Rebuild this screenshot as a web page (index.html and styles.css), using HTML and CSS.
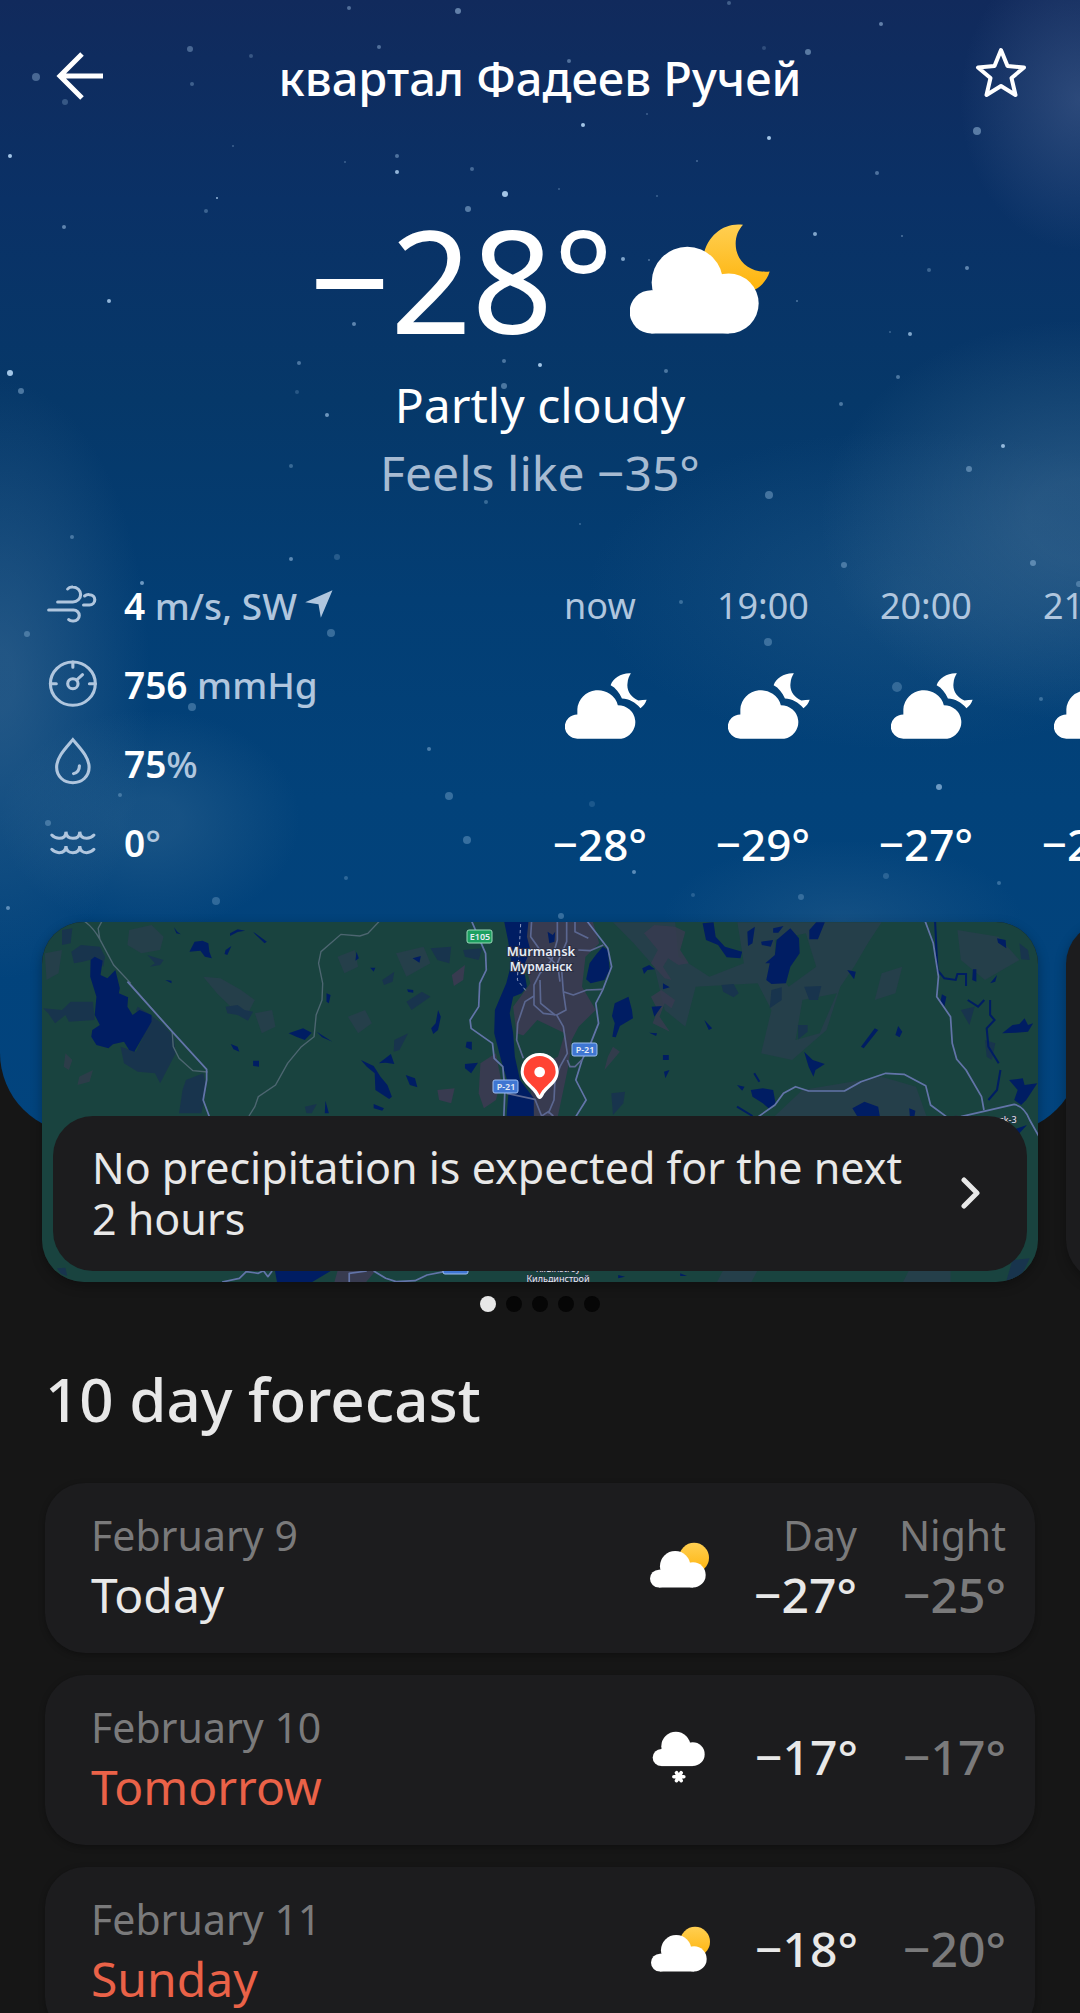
FILE: index.html
```html
<!DOCTYPE html>
<html lang="en">
<head>
  <meta charset="UTF-8" />
  <meta name="viewport" content="width=device-width, initial-scale=1.0"/>
  <title>Weather</title>
  <link rel="stylesheet" href="styles.css">
</head>
<body>
  <!-- shared icons -->
  <svg class="sprite" aria-hidden="true">
    <defs>
      <linearGradient id="gold" x1="0" y1="0" x2="0" y2="1">
        <stop offset="0" stop-color="#ffcf52"/>
        <stop offset="1" stop-color="#feb40c"/>
      </linearGradient>
    </defs>
    <symbol id="cloud-moon" viewBox="70 399 239 199" preserveAspectRatio="none">
      <path d="M106 597a36 36 0 0 1 0-73V508a60 60 0 0 1 118-12a51 51 0 0 1 10 101z"/>
      <path d="M262 400C235 398 210 415 203 436C218 444 228 458 236 476C256 477 275 487 290 505C298 500 304 492 308 480Q296 480 284 482C262 472 250 452 252 432C253 418 257 408 262 400Z"/>
    </symbol>
    <symbol id="cloud-sun" viewBox="153 188 178 136">
      <circle cx="286" cy="234" r="45" fill="url(#gold)"/>
      <circle cx="180" cy="297" r="27"/>
      <circle cx="229" cy="260" r="46"/>
      <circle cx="283" cy="286" r="38"/>
      <path d="M180 270H283V324H180z"/>
    </symbol>
    <symbol id="cloud-snow" viewBox="153 752 178 160">
      <circle cx="184" cy="832" r="26"/>
      <circle cx="228" cy="798" r="44"/>
      <circle cx="279" cy="822" r="36"/>
      <path d="M184 806H279V858H184z"/>
      <path d="M222 890H252M230 878L244 902M244 878L230 902" stroke="#fff" stroke-width="11" stroke-linecap="round"/>
    </symbol>
  </svg>

  <section class="hero">
    <svg class="stars" id="stars" viewBox="0 0 1080 1133" preserveAspectRatio="xMidYMin slice" aria-hidden="true"></svg>

    <header class="top-bar">
      <button class="icon-btn" aria-label="Back">
        <svg width="52" height="56" viewBox="0 0 52 56"><path d="M30 4L8 26L30 48M9 26H51" fill="none" stroke="#fff" stroke-width="5"/></svg>
      </button>
      <h1>квартал Фадеев Ручей</h1>
      <button class="icon-btn" aria-label="Add to favourites">
        <svg width="52" height="56" viewBox="0 0 52 56"><path d="M25 0L31.500 16L48 17.500L35.500 28L39.500 45L25 36L10.500 45L14.500 28L2 17.500L18.500 16Z" fill="none" stroke="#fff" stroke-width="4" stroke-linejoin="round"/></svg>
      </button>
    </header>

    <div class="current">
      <span class="temp">−28°</span>
      <svg width="141" height="110" viewBox="80 74 423 329" fill="#fff">
        <path d="M419 76C365 68 312 105 300 170L360 260L455 270C475 260 492 240 499 216C440 222 397 185 397 133C397 110 405 92 419 76Z" fill="url(#gold)"/>
        <circle cx="144" cy="337" r="65"/>
        <circle cx="252" cy="249" r="107"/>
        <circle cx="376" cy="312" r="90"/>
        <path d="M144 273H376V402H144z"/>
      </svg>
    </div>
    <p class="condition">Partly cloudy</p>
    <p class="condition muted">Feels like −35°</p>

    <div class="details">
      <ul class="stats">
        <li>
          <svg viewBox="140 118 139 144" preserveAspectRatio="none"><path d="M168 184H212A22 22 0 0 0 212 139Q202 138 197 145M243 193H260A15 15 0 0 0 260 162Q252 161 246 166M142 208H214A16 16 0 0 1 214 241Q205 242 200 237"/></svg>
          <span><b>4</b> m/s, SW</span>
          <svg class="direction" viewBox="893 149 83 84"><path d="M975 150L940 232L933 192L893 186Z"/></svg>
        </li>
        <li>
          <svg viewBox="140 355 139 144" preserveAspectRatio="none"><circle cx="212" cy="429" r="65"/><circle cx="212" cy="429" r="15"/><path d="M212 364V380M147 429H164M260 429H277M223 418L240 402"/></svg>
          <span><b>756</b> mmHg</span>
        </li>
        <li>
          <svg viewBox="140 592 139 144" preserveAspectRatio="none"><path d="M212 597C235 625 259 650 259 680C259 708 238 726 212 726C186 726 165 708 165 680C165 650 189 625 212 597ZM231 675Q231 694 214 699"/></svg>
          <span><b>75</b>%</span>
        </li>
        <li>
          <svg viewBox="140 829 139 144" preserveAspectRatio="none"><path d="M151 883Q160 893 172 893Q192 893 192 873Q193 893 212 893Q232 893 232 873Q233 893 252 893Q264 893 273 883M151 926Q160 936 172 936Q192 936 192 916Q193 936 212 936Q232 936 232 916Q233 936 252 936Q264 936 273 926"/></svg>
          <span><b>0</b>°</span>
        </li>
      </ul>

      <ul class="hours">
        <li><span class="hour">now</span><svg><use href="#cloud-moon"/></svg><span class="hour-temp">−28°</span></li>
        <li><span class="hour">19:00</span><svg><use href="#cloud-moon"/></svg><span class="hour-temp">−29°</span></li>
        <li><span class="hour">20:00</span><svg><use href="#cloud-moon"/></svg><span class="hour-temp">−27°</span></li>
        <li><span class="hour">21:00</span><svg><use href="#cloud-moon"/></svg><span class="hour-temp">−27°</span></li>
      </ul>
    </div>
  </section>

  <section class="carousel">
    <article class="map-card">
      <svg class="map" viewBox="42 22 996 360" preserveAspectRatio="xMidYMid slice" role="img" aria-label="Map">
        <g transform="scale(.34439 .33333)">
          <rect x="100" y="50" width="2950" height="1120" fill="#19433f"/>

          <!-- open ground -->
          <g fill="#253f4a">
            <path d="M375 90L440 75L475 110L465 150L410 160L370 135Z"/>
            <path d="M590 230L640 235L700 270L740 300L720 340L670 320L630 280Z"/>
            <path d="M740 340L790 330L800 380L760 400Z"/>
            <path d="M980 170L1030 150L1040 200L1000 220Z"/>
            <path d="M1010 350L1060 330L1080 370L1040 400Z"/>
            <path d="M1150 160L1230 140L1250 190L1180 230Z"/>
            <path d="M130 160L180 150L170 220L135 240Z"/>
            <path d="M1780 67H2560L2520 130L2480 200L2440 260L2400 390L2300 480L2210 460L2240 330L2200 250L2020 260L1990 380L1930 330L1900 200L1840 130Z"/>
            <path d="M2560 220L2620 200L2600 280L2540 300Z"/>
            <path d="M2250 648L2330 570L2560 530L2660 560L2690 648Z"/>
            <path d="M2780 90L2900 110L2960 180L2860 240L2790 180Z"/>
            <path d="M2640 1110H2760V1150H2620Z"/>
            <path d="M2100 1110H2200L2180 1150H2080Z"/>
          </g>
          <g fill="#19433f">
            <path d="M1960 60H2140L2160 190L2060 230L1970 170Z"/>
            <path d="M2250 120L2340 100L2370 200L2290 260L2250 200Z"/>
            <path d="M2330 300L2430 280L2380 400L2310 420Z"/>
          </g>
          <g fill="#383b50">
            <path d="M1312 225L1350 195L1345 240L1318 258Z"/>
            <path d="M1395 490L1440 460L1455 540L1440 600L1405 625L1390 580Z"/>
            <path d="M1270 570L1320 565L1310 610L1275 600Z"/>
            <path d="M1490 60H1720L1740 130L1700 170L1690 260L1730 330L1680 380L1660 420L1650 500L1620 648H1550L1530 480L1560 420L1500 400L1490 320L1540 250Z"/>
            <path d="M980 1113H1090L1060 1150H970Z"/>
            <path d="M190 460L210 480L200 510L185 500ZM230 530L270 510L260 545L225 555Z" opacity=".6"/>
            <path d="M1900 75L1960 80L1990 95L1975 150L2000 190L1970 195L1940 175L1925 200L1950 240L1930 235L1890 190L1910 150L1870 100Z" opacity=".8"/>
            <path d="M1920 270L1960 300L1950 325L1930 310L1915 350L1945 395L1895 370L1910 330L1890 290ZM1780 440L1800 455L1755 510L1765 470Z" opacity=".8"/>
          </g>
          <path fill="#19433f" d="M1508 420L1560 360L1640 400L1620 470L1560 500L1520 460Z"/>

          <!-- marsh -->
          <g fill="#18344d">
            <path d="M180 90L210 85L205 130L180 135Z"/>
            <path d="M207 155L235 135L290 140L305 170L300 200L280 175L240 185L215 190Z"/>
            <path d="M125 325L180 330L205 305L270 305L275 360L200 365L190 345L160 370L140 340Z"/>
            <path d="M400 320L430 340L470 370L505 410L510 460L465 550L450 520L400 515L360 490L350 440L395 455L425 390L395 330Z"/>
            <path d="M540 540L590 520L600 560L585 640L520 640L530 570Z"/>
            <path d="M655 320L690 315L710 330L735 335L720 362L690 345L660 340Z"/>
            <path d="M428 165L475 180L465 195L435 200L450 190Z"/>
            <path d="M1110 240L1145 215L1140 245L1115 255Z"/>
            <path d="M1180 305L1225 275L1250 290L1195 330Z"/>
            <path d="M1145 420L1185 400L1160 450L1143 455Z"/>
            <path d="M1250 145L1310 140L1305 190L1270 180Z"/>
            <path d="M1345 150L1400 145L1390 180L1350 170Z"/>
            <path d="M885 620L920 612L905 640L890 640Z"/>
            <path d="M2095 255L2130 252L2145 280L2130 292L2100 275Z"/>
            <path d="M2240 270L2270 262L2270 300L2235 325Z"/>
            <path d="M2335 260L2385 258L2375 300L2350 300Z"/>
            <path d="M2317 375H2345V395L2318 418Z"/>
            <path d="M2790 330L2830 320L2815 375Z"/>
            <path d="M2960 130L2985 150L2990 180L2965 178Z"/>
            <path d="M1775 580L1815 575L1810 610L1780 645Z"/>
            <path d="M2860 420L2890 430L2880 480L2865 470Z"/>
            <path d="M2940 1080L2990 1075L2960 1140L2920 1150Z"/>
            <path d="M165 1105L190 1103L195 1128L178 1122Z"/>
          </g>

          <!-- lakes and the bay -->
          <g fill="#001d63">
            <path d="M263 180L275 170L298 182L292 225L312 235L335 210L348 265L345 280L372 292L370 320L385 345L405 330L440 345L440 365L390 455L375 450L360 425L328 433L315 445L280 435L265 410L268 390L290 375L275 345L280 290L262 230Z"/>
            <path d="M550 155L565 125L588 122L605 130L608 155L615 175L595 170L582 152Z"/>
            <path d="M505 82L515 95L525 103L512 100ZM655 150L672 138L660 165L652 162ZM668 100L690 88L712 92L690 96L668 108ZM735 95L775 125L768 130L740 102Z"/>
            <path d="M480 240L498 242L498 250ZM670 432L690 440L695 455L678 448ZM735 482H752V500L735 498Z"/>
            <path d="M838 400L880 385L905 398L885 420L860 410ZM920 395L965 425L935 412ZM948 280L960 285L955 310L948 305Z"/>
            <path d="M1035 155L1042 175L1032 182ZM1075 203H1090L1085 215ZM1198 175L1222 168L1218 188ZM1182 268L1200 270L1200 278L1185 276Z"/>
            <path d="M1272 330L1280 350L1272 390L1258 402L1252 385L1265 370Z"/>
            <path d="M1048 480L1085 498L1105 530L1125 555L1138 590L1130 597L1090 570L1088 520L1065 500ZM1100 490L1135 462L1145 492L1120 488Z"/>
            <path d="M1178 525L1205 535L1212 562L1190 555ZM1085 612L1115 625L1110 632L1085 625ZM945 602L955 640L943 640ZM1355 425L1370 425V450L1352 442ZM1350 492L1388 488L1368 520L1350 505Z"/>
            <path d="M1463 60H1535L1530 110L1540 150L1520 200L1530 260L1515 280L1490 290L1480 340L1490 400L1495 470L1510 540L1550 595V660H1470L1478 560L1455 480L1435 400L1437 330L1470 250L1485 190L1475 120Z"/>
            <path d="M1750 140L1765 150L1770 210L1755 240L1715 250L1702 238L1712 190L1730 165ZM1785 310L1825 290L1835 330L1838 355L1800 378L1788 412L1778 410L1785 370L1777 348Z"/>
            <path d="M1590 95L1605 105L1612 95L1610 125L1595 130Z"/>
            <path d="M2040 70L2072 67L2078 110L2105 140L2155 155L2150 175L2110 172L2085 135L2050 120ZM2170 95L2192 80L2185 130L2172 138ZM2210 125L2245 120L2238 140L2212 135ZM2245 85L2275 78L2260 98L2245 98Z"/>
            <path d="M2255 120L2295 85L2320 115L2322 160L2295 200L2282 250L2240 252L2225 240L2235 190L2222 190L2250 165ZM2350 90L2370 67H2395L2375 118L2350 118Z"/>
            <path d="M1865 205L1885 195L1902 208L1880 210L1870 222ZM1892 320L1922 318L1900 350ZM1925 250L1945 262L1925 268ZM1885 398L1908 400L1905 408ZM1925 465H1942V480L1925 480ZM1928 515L1944 510L1932 535Z"/>
            <path d="M2045 360L2068 385L2058 390ZM2335 455L2360 480L2395 492L2368 510L2362 530L2348 500ZM2460 210L2485 215L2480 238ZM2608 378L2620 395L2612 412L2600 405ZM2540 385L2550 390L2508 445L2500 440Z"/>
            <path d="M2180 570L2215 565L2245 570L2252 610L2235 628L2215 610L2185 590ZM2140 555L2162 560L2155 572ZM2475 625L2510 605L2550 620L2555 650H2490ZM2640 625L2658 632L2655 650H2642Z"/>
            <path d="M2910 400L2940 375L2960 372L2975 355L2985 375L3000 370L2985 395L2950 398ZM2930 540L2970 535L2975 555L3012 550L2980 600L2965 615L2945 600L2955 570ZM2895 115L2920 120L2922 145L2898 128ZM2825 208H2835V245L2823 240ZM2875 250L2895 225L2890 245Z"/>
            <path d="M2735 283L2748 290L2742 320L2730 310ZM2940 690L2982 675L2960 700Z"/>
            <path d="M798 1110H965L900 1150H805ZM1795 1125L1815 1130L1795 1135ZM1975 1120L1995 1128H1975Z"/>
          </g>
          <g fill="none" stroke="#001d63" stroke-width="6">
            <path d="M2715 60L2722 210L2742 235L2775 240L2780 222H2805V258M2810 300L2840 320L2858 300M2875 300V345L2888 360L2865 385L2870 440L2900 490M2905 510L2895 570L2870 600M2190 520L2205 545M2140 620L2185 648"/>
          </g>

          <!-- minor roads -->
          <g fill="none" stroke="#4d6671" stroke-width="4">
            <path d="M240 60Q270 80 290 118L330 195L380 250M298 60L285 85L290 118M1105 60L1068 100L1045 108L990 103L932 155L925 190L937 250L935 300L918 345L912 410L875 440L835 490L800 555L750 590L740 620L723 648M372 245L500 395L503 440L520 475L560 512L603 516"/>
          </g>
          <!-- highways -->
          <g fill="none" stroke="#6274a8" stroke-width="5" stroke-linejoin="round">
            <path d="M370 245L500 395L600 508V540L590 600L608 650"/>
            <path d="M1368 60L1410 160L1412 210L1393 250L1390 320L1365 360L1368 385L1430 430L1435 475L1460 500L1466 570L1463 650"/>
            <path d="M1702 60L1765 145L1776 200L1750 270L1730 310L1738 370L1715 430L1690 480L1672 540L1702 600L1672 650"/>
            <path d="M2685 60L2710 130L2725 230L2720 290L2760 350L2765 430L2778 478L2805 510L2850 590L2857 630"/>
            <path d="M2202 650L2250 615L2275 580L2310 560L2348 573H2452L2500 545L2572 520L2625 523L2688 557L2702 615L2748 650M2790 650L2945 613Q2975 620 2990 660L3020 715"/>
            <path d="M645 1146L695 1135L715 1115L750 1120L765 1112L778 1130L790 1113M1014 1150V1120L1065 1113M1085 1113L1120 1135L1150 1145L1205 1142L1240 1125L1290 1115"/>
          </g>
        </g>

        <!-- city streets -->
        <g transform="translate(440 10) scale(.33333)" fill="none" stroke="#5b6791" stroke-width="5" stroke-linejoin="round">
          <path d="M275 30L272 80L300 120L335 150L365 180L370 245L378 300L350 315L310 310L282 285V225L300 190L335 150L352 90V30"/>
          <path d="M380 30V95L352 160L360 215M405 30V65L445 85M415 120L450 122L490 105M370 245L400 255L440 240L488 238"/>
          <path d="M282 258L255 275L233 340L230 390L250 445M350 315L370 350L382 430L360 470L345 510L342 570L325 610M300 210L302 280L345 315M382 450L390 470L405 470L425 450M200 550L285 568L305 618L325 605L340 618"/>
          <path d="M242 42L232 210L260 245" stroke="#8f9cc0" stroke-width="3" stroke-dasharray="10 8"/>
        </g>

        <g class="road-sign">
          <rect x="467" y="30" width="25" height="13" rx="2" fill="#1c9f60" stroke="#9adbb9"/>
          <text x="480" y="40">E105</text>
          <rect x="493" y="180" width="25" height="13" rx="2" fill="#3f76d2" stroke="#9cbdf0"/>
          <text x="506" y="190">P-21</text>
          <rect x="572" y="143" width="25" height="13" rx="2" fill="#3f76d2" stroke="#9cbdf0"/>
          <text x="585" y="153">P-21</text>
          <rect x="443" y="361" width="25" height="13" rx="2" fill="#3f76d2" stroke="#9cbdf0"/>
        </g>
        <g class="place">
          <text x="541" y="56">Murmansk</text>
          <text x="541" y="71" class="local">Мурманск</text>
          <text x="558" y="372" class="small">Kildinstroy</text>
          <text x="558" y="382" class="small">Кильдинстрой</text>
          <text x="985" y="223" class="small">Severomorsk-3</text>
        </g>

        <!-- pin -->
        <g transform="translate(440 10) scale(.33333)">
          <path d="M299 429A56 56 0 0 1 356 485C356 520 320 535 311 555Q299 579 287 555C279 535 242 520 242 485A56 56 0 0 1 299 429Z" fill="#fff"/>
          <path d="M299 438A48 48 0 0 1 347 485C347 515 309 528 299 556C289 528 251 515 251 485A48 48 0 0 1 299 438Z" fill="#ff4333"/>
          <circle cx="299" cy="486" r="16" fill="#fff"/>
        </g>
      </svg>
      <a href="#" class="notice">
        <span>No precipitation is expected for the next 2 hours</span>
        <svg width="20" height="32" viewBox="0 0 20 32"><path d="M3 3L16 16L3 29" fill="none" stroke="#e8e8e8" stroke-width="5" stroke-linecap="round" stroke-linejoin="round"/></svg>
      </a>
    </article>
    <article class="map-card"></article>
  </section>

  <div class="dots">
    <button class="active" aria-label="Slide 1"></button>
    <button aria-label="Slide 2"></button>
    <button aria-label="Slide 3"></button>
    <button aria-label="Slide 4"></button>
    <button aria-label="Slide 5"></button>
  </div>

  <main>
    <h2>10 day forecast</h2>
    <ul class="forecast">
      <li class="day">
        <div class="date"><span class="gray">February 9</span><span>Today</span></div>
        <svg height="46"><use href="#cloud-sun"/></svg>
        <div class="value"><span class="label">Day</span><span>−27°</span></div>
        <div class="value night"><span class="label">Night</span><span>−25°</span></div>
      </li>
      <li class="day weekend">
        <div class="date"><span class="gray">February 10</span><span>Tomorrow</span></div>
        <svg height="53"><use href="#cloud-snow"/></svg>
        <div class="value"><span>−17°</span></div>
        <div class="value night"><span>−17°</span></div>
      </li>
      <li class="day weekend">
        <div class="date"><span class="gray">February 11</span><span>Sunday</span></div>
        <svg height="46"><use href="#cloud-sun"/></svg>
        <div class="value"><span>−18°</span></div>
        <div class="value night"><span>−20°</span></div>
      </li>
    </ul>
  </main>

  <script>
    // x, y, radius, opacity
    const stars = [
      [349, 8, 2, .4], [458, 11, 3, .5], [729, 3, 2, .3], [881, 24, 2, .5], [190, 49, 3, .35], [379, 47, 2, .4],
      [251, 56, 2, .25], [36, 77, 4, .35], [192, 84, 2, .3], [65, 102, 3, .25], [569, 61, 2, .4], [808, 52, 3, .45],
      [764, 48, 2, .2], [647, 114, 1, .3], [583, 125, 2, .9], [769, 138, 2, .9], [977, 131, 4, .45], [10, 156, 2, .9],
      [233, 146, 1, .3], [397, 156, 2, .4], [397, 172, 2, .8], [345, 162, 1, .3], [472, 169, 2, .35], [697, 161, 1, .35],
      [877, 173, 2, .4], [505, 194, 3, .9], [559, 189, 1, .3], [657, 196, 1, .3], [217, 198, 1, .8], [206, 211, 2, .3],
      [468, 209, 3, .45], [64, 227, 2, .5], [815, 234, 2, .7], [902, 236, 1, .4], [623, 259, 2, .7], [649, 260, 1, .4],
      [967, 268, 2, .5], [929, 270, 2, .3], [109, 301, 2, .8], [354, 324, 2, .5], [797, 301, 1, .4], [910, 334, 2, .7],
      [890, 332, 1, .3], [10, 373, 3, .9], [21, 391, 3, .4], [299, 363, 2, .4], [297, 392, 2, .2], [504, 361, 2, .4],
      [540, 365, 2, .9], [666, 371, 2, .4], [504, 386, 3, .4], [898, 377, 2, .4], [841, 404, 2, .4], [327, 415, 2, .6],
      [1003, 446, 2, .8], [291, 466, 2, .3], [969, 469, 3, .4], [769, 495, 4, .35], [486, 502, 2, .3], [580, 524, 1, .3],
      [72, 537, 2, .35], [291, 559, 2, .5], [337, 557, 3, .2], [142, 583, 2, .6], [27, 634, 3, .3], [331, 633, 4, .3],
      [192, 707, 4, .3], [429, 749, 2, .4], [449, 796, 4, .3], [467, 840, 4, .3], [120, 795, 2, .3], [48, 823, 3, .3],
      [346, 878, 2, .25], [216, 901, 4, .25], [8, 908, 2, .5], [844, 565, 3, .35], [1033, 563, 3, .4], [1079, 584, 3, .3],
      [681, 602, 2, .3], [768, 642, 4, .3], [897, 687, 5, .25], [1041, 699, 2, .3], [939, 787, 3, .6], [592, 804, 3, .15],
      [634, 872, 2, .5], [886, 876, 3, .2], [999, 883, 2, .3], [801, 897, 3, .25], [693, 895, 2, .2], [561, 916, 3, .3]
    ];

    document.getElementById("stars").innerHTML = stars
      .map(([x, y, r, o]) => `<circle cx="${x}" cy="${y}" r="${r}" fill="#b4d6f5" opacity="${o}"/>`)
      .join("");
  </script>
</body>
</html>
```
FILE: styles.css
```css
* { margin: 0; padding: 0; box-sizing: border-box; }

body {
  height: 100vh;
  overflow: hidden;
  font-family: "Noto Sans", "Open Sans", sans-serif;
  background: #161616;
  color: #e8e8e8;
}

ul { list-style: none; }

button {
  background: none;
  border: none;
  cursor: pointer;
}

.sprite {
  position: absolute;
  width: 0;
  height: 0;
}

/* Hero */

.hero {
  position: relative;
  overflow: hidden;
  padding: 48px 0 251px;
  border-radius: 0 0 80px 80px;
  color: #fff;
  background:
    radial-gradient(ellipse 120px 150px at 100% 100px, rgba(90, 115, 160, 0.4), transparent),
    radial-gradient(ellipse 260px 200px at 100% 520px, rgba(80, 120, 155, 0.4) 20%, transparent),
    radial-gradient(ellipse 320px 160px at 84% 590px, rgba(60, 110, 150, 0.3), transparent),
    radial-gradient(ellipse 150px 300px at 0 680px, rgba(80, 120, 155, 0.4) 10%, transparent),
    radial-gradient(ellipse 150px 110px at 150px 820px, rgba(60, 110, 150, 0.35) 20%, transparent),
    radial-gradient(ellipse 180px 80px at 78% 920px, rgba(60, 110, 150, 0.3), transparent),
    linear-gradient(#112a5c, #0a3166 200px, #063869 400px, #033e74 600px, #02427a 800px, #02447e);
}

.stars {
  position: absolute;
  inset: 0;
  width: 100%;
  height: 100%;
}

.top-bar {
  position: relative;
  display: flex;
  justify-content: space-between;
  align-items: center;
  height: 60px;
  padding: 0 52px;
}

.top-bar h1 {
  font-size: 47px;
  line-height: 60px;
  font-weight: 500;
}

.icon-btn svg {
  display: block;
  overflow: visible;
}

.current {
  position: relative;
  display: flex;
  justify-content: center;
  align-items: baseline;
  gap: 16px;
  margin-top: 91px;
}

.temp {
  font-size: 142px;
  line-height: 160px;
}

.condition {
  position: relative;
  font-size: 48px;
  line-height: 68px;
  text-align: center;
}

.current + .condition { margin-top: 12px; }

.muted { color: #a7bbd2; }

.details {
  position: relative;
  display: flex;
  margin-top: 59px;
}

.stats {
  flex: 0 0 48%;
  padding-left: 48px;
  font-size: 37px;
  font-weight: 500;
  line-height: 79px;
  color: #b0c6de;
}

.stats li {
  display: flex;
  align-items: center;
}

.stats b {
  font-weight: 600;
  color: #fff;
}

.stats svg {
  width: 48px;
  height: 48px;
  margin: 0 28px 4px 0;
  overflow: visible;
  fill: none;
  stroke: #b0c6de;
  stroke-width: 9;
  stroke-linecap: round;
}

.stats .direction {
  width: 28px;
  height: 28px;
  margin: 0 0 4px 8px;
  fill: #b0c6de;
  stroke: none;
}

.hours {
  flex: 1;
  display: flex;
  overflow: hidden;
}

.hours li {
  flex: 0 0 163px;
  display: flex;
  flex-direction: column;
  align-items: center;
}

.hours svg {
  width: 82px;
  height: 66px;
  margin: 28px 0 75px 12px;
  fill: #fff;
}

.hour {
  font-size: 36px;
  line-height: 79px;
  color: #b0c6de;
}

.hour-temp {
  font-size: 44px;
  line-height: 60px;
  font-weight: 500;
}

/* Cards over the hero edge */

.carousel {
  position: relative;
  display: flex;
  gap: 28px;
  margin-top: -211px;
  padding-left: 42px;
  overflow-x: clip;
}

.map-card {
  position: relative;
  flex: 0 0 calc(100% - 42px);
  height: 360px;
  overflow: hidden;
  border-radius: 42px;
  background: #1c1c1e;
  box-shadow: 0 4px 12px rgba(0, 0, 0, 0.3);
}

.map {
  display: block;
  width: 100%;
  height: 100%;
}

.road-sign, .place {
  font-size: 9px;
  font-weight: 600;
  fill: #e6ecf5;
  text-anchor: middle;
}

.place {
  font-size: 13px;
  paint-order: stroke;
  stroke: #2b2f45;
  stroke-width: 2;
}

.place .local { font-size: 12px; }

.place .small {
  font-size: 9px;
  font-weight: 400;
  stroke-width: 1;
}

.notice {
  position: absolute;
  left: 11px;
  right: 11px;
  bottom: 11px;
  display: flex;
  justify-content: space-between;
  align-items: center;
  padding: 26px 46px 27px 39px;
  border-radius: 40px;
  background: #1c1c1e;
  color: #e8e8e8;
  font-size: 43px;
  line-height: 51px;
  text-decoration: none;
}

.notice span { flex: 0 1 830px; }

.dots {
  display: flex;
  justify-content: center;
  gap: 10px;
  margin-top: 14px;
}

.dots button {
  width: 16px;
  height: 16px;
  border-radius: 50%;
  background: #060606;
}

.dots .active { background: #e8e8e8; }

/* Forecast */

main { padding: 47px 45px 22px; }

h2 {
  font-size: 60px;
  line-height: 80px;
  font-weight: 500;
}

.forecast {
  display: flex;
  flex-direction: column;
  gap: 22px;
  margin-top: 44px;
}

.day {
  display: flex;
  align-items: center;
  gap: 42px;
  padding: 22px 29px 28px 46px;
  border-radius: 40px;
  background: #1c1c1e;
  box-shadow: 0 2px 6px rgba(0, 0, 0, 0.3);
  font-size: 48px;
  line-height: 60px;
}

.day svg {
  width: 59px;
  fill: #fff;
}

.date {
  flex: 1;
  display: flex;
  flex-direction: column;
}

.date .gray, .label {
  font-size: 41px;
  font-weight: 400;
  color: #7a7a7b;
}

.weekend .date { color: #ea6248; }

.value {
  flex: 0 0 106px;
  display: flex;
  flex-direction: column;
  align-items: flex-end;
  font-weight: 500;
}

.night { color: #7a7a7b; }
```
